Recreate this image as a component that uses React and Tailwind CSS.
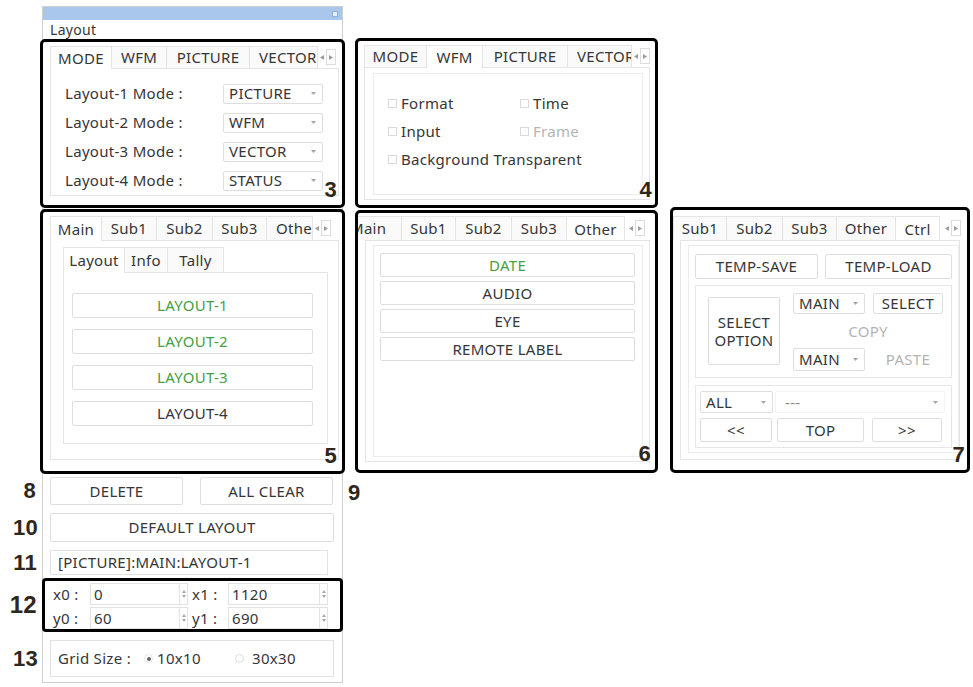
import React from 'react';

const GREEN = 'text-[#45a045]';
const DIM = 'text-[#b4b4b4]';

function Arrows({ className = '' }) {
    return (
        <div className={`flex items-center h-[16px] shrink-0 ${className}`}>
            <svg width="4" height="5" viewBox="0 0 4 5" className="mx-[2px]"><path d="M4 0L0 2.5L4 5Z" fill="#9c9c9c" /></svg>
            <div className="flex items-center h-full px-[2px] border border-[#dcdcdc] bg-white">
                <svg width="4" height="5" viewBox="0 0 4 5"><path d="M0 0L4 2.5L0 5Z" fill="#9c9c9c" /></svg>
            </div>
        </div>
    );
}

function Tab({ label, w = '', active, first, clip, start }) {
    const align = clip ? 'flex-1 min-w-0 justify-start pl-[9px]' : start ? 'shrink-0 justify-start pl-[9px]' : 'shrink-0 justify-center';
    return (
        <div
            className={`${w} ${align} flex items-center self-start whitespace-nowrap overflow-hidden border-t border-r border-[#e4e4e4] ${first ? 'border-l' : ''} ${active ? 'bg-white h-[calc(100%+1px)] relative z-10' : 'bg-[#fafafa] h-full'}`}
        >
            {label}
        </div>
    );
}

function Combo({ label, w, h = 'h-[20px]', className = '', labelClass = '' }) {
    return (
        <div className={`${w} ${h} flex items-center justify-between pl-[5px] pr-[6px] border border-[#dedede] rounded-[2px] bg-white shrink-0 ${className}`}>
            <span className={labelClass}>{label}</span>
            <svg width="5" height="3" viewBox="0 0 5 3"><path d="M0 0H5L2.5 3Z" fill="#a4a4a4" /></svg>
        </div>
    );
}

function Btn({ children, className = '', color = '' }) {
    return (
        <div className={`flex items-center justify-center text-center border border-[#dedede] rounded-[2px] bg-white shrink-0 ${color} ${className}`}>
            {children}
        </div>
    );
}

function Num({ n, className = '' }) {
    return (
        <span className={`absolute font-['Liberation_Sans',sans-serif] font-bold text-[22px] leading-none text-[#2f261c] ${className}`}>
            {n}
        </span>
    );
}

function Check({ label, dim }) {
    return (
        <div className="flex items-center">
            <span className="w-[9px] h-[9px] border border-[#dadada] bg-white mr-[4px]" />
            <span className={dim ? DIM : ''}>{label}</span>
        </div>
    );
}

function Spin({ value, w }) {
    return (
        <div className={`${w} h-full flex items-center justify-between border border-[#e2e2e2] bg-white pl-[3px]`}>
            <span>{value}</span>
            <div className="flex flex-col items-center justify-center gap-[2px] w-[8px] h-full border-l border-[#e2e2e2]">
                <svg width="4" height="3" viewBox="0 0 4 3"><path d="M0 3L2 0L4 3Z" fill="#a8a8a8" /></svg>
                <svg width="4" height="3" viewBox="0 0 4 3"><path d="M0 0H4L2 3Z" fill="#a8a8a8" /></svg>
            </div>
        </div>
    );
}

const BOX = 'relative border-[3px] border-black rounded-[5px] bg-white flex flex-col';

export default function App() {
    return (
        <div className="w-[973px] h-[687px] bg-white flex items-start overflow-hidden font-['Noto_Sans',sans-serif] text-[15px] tracking-[0.3px] text-[#363636]">
            {/* Left window */}
            <div className="ml-[42px] mt-[6px] w-[301px] border border-[#cfcfcf] flex flex-col pb-[5px]">
                <div className="h-[13px] bg-[#a9c7ec] flex items-center justify-end pr-[4px]">
                    <span className="w-[6px] h-[6px] bg-[#e8effa] border border-[#8fb0dc]" />
                </div>
                <div className="h-[19px] pl-[7px] flex items-center text-[14px]">Layout</div>

                {/* 3 */}
                <div className={`${BOX} -mx-[3px] h-[169px]`}>
                    <div className="h-[22px] mt-[4px] pl-[7px] pr-[6px] flex items-start">
                        <Tab label="MODE" w="w-[62px]" active first />
                        <Tab label="WFM" w="w-[55px]" />
                        <Tab label="PICTURE" w="w-[83px]" />
                        <Tab label="VECTOR" clip />
                        <Arrows className="mt-[3px]" />
                    </div>
                    <div className="ml-[7px] mr-[3px] h-[128px] border border-[#e4e4e4] pt-[10px] pl-[14px] pr-[15px]">
                        {[
                            ['Layout-1 Mode :', 'PICTURE'],
                            ['Layout-2 Mode :', 'WFM'],
                            ['Layout-3 Mode :', 'VECTOR'],
                            ['Layout-4 Mode :', 'STATUS'],
                        ].map(([l, v]) => (
                            <div key={l} className="h-[29px] flex items-center justify-between">
                                <span>{l}</span>
                                <Combo label={v} w="w-[100px]" />
                            </div>
                        ))}
                    </div>
                    <Num n="3" className="right-[5px] bottom-[4px]" />
                </div>

                {/* 5 */}
                <div className={`${BOX} -mx-[3px] mt-[1px] h-[265px]`}>
                    <div className="h-[24px] mt-[4px] pl-[7px] pr-[11px] flex items-start">
                        <Tab label="Main" w="w-[52px]" active first />
                        <Tab label="Sub1" w="w-[55px]" />
                        <Tab label="Sub2" w="w-[56px]" />
                        <Tab label="Sub3" w="w-[54px]" />
                        <Tab label="Other" clip />
                        <Arrows className="mt-[4px]" />
                    </div>
                    <div className="ml-[7px] mr-[3px] h-[220px] border border-[#e4e4e4] pt-[6px] pl-[12px] pr-[10px]">
                        <div className="h-[25px] flex items-start">
                            <Tab label="Layout" w="w-[62px]" active first />
                            <Tab label="Info" w="w-[43px]" />
                            <Tab label="Tally" w="w-[56px]" />
                        </div>
                        <div className="h-[172px] border border-[#e4e4e4] pt-[20px] pl-[8px] pr-[14px] flex flex-col gap-[11px]">
                            <Btn className="h-[25px] border-[#a9c6df]" color={GREEN}>LAYOUT-1</Btn>
                            <Btn className="h-[25px]" color={GREEN}>LAYOUT-2</Btn>
                            <Btn className="h-[25px]" color={GREEN}>LAYOUT-3</Btn>
                            <Btn className="h-[25px]">LAYOUT-4</Btn>
                        </div>
                    </div>
                    <Num n="5" className="right-[5px] bottom-[4px]" />
                </div>

                {/* 8 / 9 */}
                <div className="relative mt-[3px] h-[28px] px-[7px] flex gap-[17px]">
                    <Num n="8" className="right-full mr-[7px] top-1/2 -translate-y-1/2" />
                    <Btn className="w-[133px] h-full">DELETE</Btn>
                    <Btn className="w-[133px] h-full">ALL CLEAR</Btn>
                    <Num n="9" className="left-full ml-[6px] top-[5px]" />
                </div>

                {/* 10 */}
                <div className="relative mt-[8px] h-[29px] px-[7px] flex">
                    <Num n="10" className="right-full mr-[5px] top-1/2 -translate-y-1/2" />
                    <Btn className="w-[284px] h-full">DEFAULT LAYOUT</Btn>
                </div>

                {/* 11 */}
                <div className="relative mt-[8px] h-[25px] px-[7px] flex">
                    <Num n="11" className="right-full mr-[6px] top-1/2 -translate-y-1/2" />
                    <div className="w-[278px] h-full border border-[#e2e2e2] pl-[7px] flex items-center">[PICTURE]:MAIN:LAYOUT-1</div>
                </div>

                {/* 12 */}
                <div className="relative mt-[3px] -mx-[1px]">
                    <Num n="12" className="right-full mr-[5px] top-[15px] text-[24px]" />
                    <div className="h-[54px] border-[3px] border-black rounded-[4px] pt-[2px] flex flex-col gap-[2px]">
                        <div className="h-[22px] pl-[8px] flex items-center">
                            <span className="w-[37px]">x0 :</span>
                            <Spin value="0" w="w-[98px]" />
                            <span className="ml-[4px] w-[36px]">x1 :</span>
                            <Spin value="1120" w="w-[100px]" />
                        </div>
                        <div className="h-[22px] pl-[8px] flex items-center">
                            <span className="w-[37px]">y0 :</span>
                            <Spin value="60" w="w-[98px]" />
                            <span className="ml-[4px] w-[36px]">y1 :</span>
                            <Spin value="690" w="w-[100px]" />
                        </div>
                    </div>
                </div>

                {/* 13 */}
                <div className="relative mt-[8px] h-[37px] px-[7px] flex">
                    <Num n="13" className="right-full mr-[5px] top-1/2 -translate-y-1/2" />
                    <div className="w-[284px] h-full border border-[#e2e2e2] pl-[7px] flex items-center">
                        <span className="w-[86px]">Grid Size :</span>
                        <span className="w-[9px] h-[9px] rounded-full border border-[#e6e6e6] flex items-center justify-center mr-[4px]">
                            <span className="w-[4px] h-[4px] rounded-full bg-[#666]" />
                        </span>
                        <span className="w-[78px]">10x10</span>
                        <span className="w-[9px] h-[9px] rounded-full border border-[#dcdcdc] mr-[8px]" />
                        <span>30x30</span>
                    </div>
                </div>
            </div>

            {/* Middle column */}
            <div className="ml-[12px] mt-[38px] w-[303px] flex flex-col gap-[2px]">
                {/* 4 */}
                <div className={`${BOX} h-[170px]`}>
                    <div className="h-[22px] mt-[4px] pl-[6px] pr-[5px] flex items-start">
                        <Tab label="MODE" w="w-[63px]" first />
                        <Tab label="WFM" w="w-[56px]" active />
                        <Tab label="PICTURE" w="w-[85px]" />
                        <Tab label="VECTOR" clip />
                        <Arrows className="mt-[3px]" />
                    </div>
                    <div className="ml-[6px] mr-[5px] h-[133px] border border-[#e4e4e4] pt-[5px] pl-[8px] pr-[6px]">
                        <div className="h-[122px] border border-[#ececec] pt-[15px] pl-[14px]">
                            <div className="h-[28px] flex items-center">
                                <div className="w-[132px]"><Check label="Format" /></div>
                                <Check label="Time" />
                            </div>
                            <div className="h-[28px] flex items-center">
                                <div className="w-[132px]"><Check label="Input" /></div>
                                <Check label="Frame" dim />
                            </div>
                            <div className="h-[28px] flex items-center">
                                <Check label="Background Transparent" />
                            </div>
                        </div>
                    </div>
                    <Num n="4" className="right-[3px] bottom-[4px]" />
                </div>

                {/* 6 */}
                <div className={`${BOX} h-[263px]`}>
                    <div className="h-[24px] mt-[3px] pr-[5px] flex items-start overflow-hidden">
                        <Tab label="Main" w="w-[61px] -ml-[17px]" start />
                        <Tab label="Sub1" w="w-[54px]" />
                        <Tab label="Sub2" w="w-[56px]" />
                        <Tab label="Sub3" w="w-[55px]" />
                        <Tab label="Other" w="w-[58px]" active />
                        <Arrows className="mt-[4px] ml-[2px]" />
                    </div>
                    <div className="ml-[7px] mr-[5px] h-[222px] border border-[#e4e4e4] pt-[4px] pl-[7px] pr-[6px]">
                        <div className="h-[212px] border border-[#ececec] pt-[7px] pl-[6px] pr-[7px] flex flex-col gap-[4px]">
                            <Btn className="h-[24px]" color={GREEN}>DATE</Btn>
                            <Btn className="h-[24px]">AUDIO</Btn>
                            <Btn className="h-[24px]">EYE</Btn>
                            <Btn className="h-[24px]">REMOTE LABEL</Btn>
                        </div>
                    </div>
                    <Num n="6" className="right-[4px] bottom-[5px]" />
                </div>
            </div>

            {/* Right column: 7 */}
            <div className="ml-[12px] mt-[207px] w-[300px]">
                <div className={`${BOX} h-[266px]`}>
                    <div className="h-[24px] mt-[6px] flex items-start overflow-hidden">
                        <Tab label="Sub1" w="w-[54px]" first />
                        <Tab label="Sub2" w="w-[56px]" />
                        <Tab label="Sub3" w="w-[54px]" />
                        <Tab label="Other" w="w-[59px]" />
                        <Tab label="Ctrl" w="w-[44px]" active />
                        <Arrows className="mt-[4px] ml-[3px]" />
                    </div>
                    <div className="ml-[7px] mr-[7px] h-[220px] border border-[#e4e4e4] pt-[4px] pl-[7px] pr-[0px]">
                        <div className="h-[208px] border border-[#ececec] pt-[8px] pl-[6px]">
                            <div className="h-[25px] flex gap-[7px]">
                                <Btn className="w-[123px] h-full">TEMP-SAVE</Btn>
                                <Btn className="w-[127px] h-full">TEMP-LOAD</Btn>
                            </div>
                            <div className="mt-[6px] w-[257px] h-[93px] border border-[#e6e6e6] flex">
                                <Btn className="ml-[12px] mt-[11px] w-[72px] h-[68px] flex-col leading-[18px]">
                                    <span>SELECT</span>
                                    <span>OPTION</span>
                                </Btn>
                                <div className="ml-[13px] pt-[7px] flex flex-col">
                                    <div className="h-[21px] flex gap-[8px]">
                                        <Combo label="MAIN" w="w-[72px]" h="h-full" />
                                        <Btn className="w-[70px] h-full">SELECT</Btn>
                                    </div>
                                    <div className={`h-[34px] flex items-center justify-center ${DIM}`}>COPY</div>
                                    <div className="h-[23px] flex gap-[8px]">
                                        <Combo label="MAIN" w="w-[72px]" h="h-full" />
                                        <div className={`w-[70px] h-full flex items-center justify-center ${DIM}`}>PASTE</div>
                                    </div>
                                </div>
                            </div>
                            <div className="mt-[7px] w-[257px] h-[63px] border border-[#e6e6e6] pt-[5px] pl-[4px]">
                                <div className="h-[22px] flex gap-[2px]">
                                    <Combo label="ALL" w="w-[73px]" h="h-full" />
                                    <Combo label="---" w="w-[170px]" h="h-full" className="border-[#f3f3f3] pl-[9px]" labelClass="text-[#888]" />
                                </div>
                                <div className="mt-[5px] h-[24px] flex">
                                    <Btn className="w-[72px] h-full">&lt;&lt;</Btn>
                                    <Btn className="ml-[5px] w-[87px] h-full">TOP</Btn>
                                    <Btn className="ml-[8px] w-[70px] h-full">&gt;&gt;</Btn>
                                </div>
                            </div>
                        </div>
                    </div>
                    <Num n="7" className="right-[2px] bottom-[4px]" />
                </div>
            </div>
        </div>
    );
}
